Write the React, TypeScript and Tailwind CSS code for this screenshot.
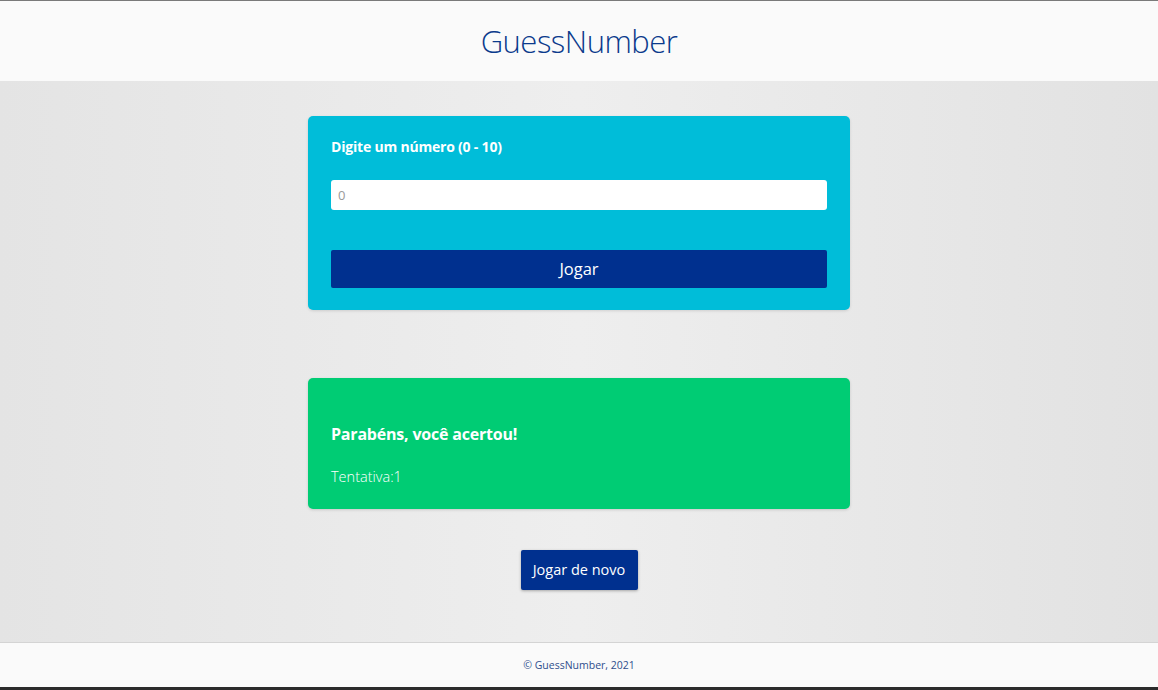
import React from "react";

export default function App() {
  const font = { fontFamily: '"Open Sans", "Noto Sans", sans-serif' };
  return (
    <div className="flex h-[690px] w-full flex-col overflow-hidden" style={font}>
      <header className="flex h-[81px] shrink-0 items-center justify-center border-t border-[#7a7a7a] bg-[#fafafa]">
        <h1 className="text-[31px] font-light tracking-[-0.5px] text-[#0b3a8c]">GuessNumber</h1>
      </header>
      <main className="flex flex-1 flex-col items-center bg-[linear-gradient(90deg,#e4e4e4_0%,#eeeeee_50%,#e2e2e2_100%)] pt-[35px]">
        <div className="w-[542px] rounded-[5px] bg-[#00bdd9] px-[23px] pb-[22px] pt-[22px] shadow-[0_1px_3px_rgba(0,0,0,0.12)]">
          <label className="block text-[14px] font-bold leading-[18px] tracking-[-0.2px] text-white">
            Digite um número (0 - 10)
          </label>
          <input
            type="text"
            placeholder="0"
            className="mt-[24px] block h-[30px] w-full rounded-[3px] bg-white px-[7px] text-[13px] text-gray-700 outline-none placeholder:text-[#9a9a9a]"
          />
          <button className="mt-[40px] block h-[38px] w-full rounded-[2px] bg-[#00308f] text-[16.5px] text-white">
            Jogar
          </button>
        </div>
        <div className="mt-[68px] flex h-[131px] w-[542px] flex-col rounded-[5px] bg-[#00cc74] px-[23px] pt-[45px] shadow-[0_1px_3px_rgba(0,0,0,0.15)]">
          <p className="text-[16px] font-bold leading-[22px] tracking-[-0.2px] text-white">Parabéns, você acertou!</p>
          <p className="mt-[21px] text-[14.5px] font-light leading-[22px] text-white">Tentativa:1</p>
        </div>
        <button className="mt-[41px] h-[40px] w-[117px] rounded-[2px] bg-[#00308f] text-[14.5px] font-medium text-white shadow-[0_1px_3px_rgba(0,0,0,0.3)]">
          Jogar de novo
        </button>
      </main>
      <footer className="flex h-[48px] shrink-0 flex-col border-t border-[#d4d4d4] bg-[#fafafa]">
        <div className="flex flex-1 items-center justify-center pt-[1px] text-[10.5px] text-[#2f4e8c]">© GuessNumber, 2021</div>
        <div className="h-[3px] bg-[#2b2b2b]" />
      </footer>
    </div>
  );
}
